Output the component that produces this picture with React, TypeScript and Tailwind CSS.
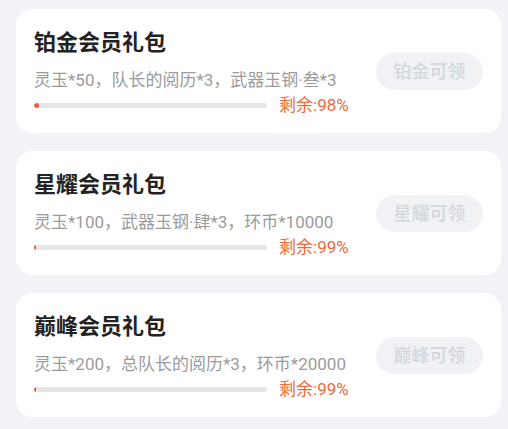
const packs = [
  { name: "铂金会员礼包", desc: "灵玉*50，队长的阅历*3，武器玉钢·叁*3", left: 98, btn: "铂金可领" },
  { name: "星耀会员礼包", desc: "灵玉*100，武器玉钢·肆*3，环币*10000", left: 99, btn: "星耀可领" },
  { name: "巅峰会员礼包", desc: "灵玉*200，总队长的阅历*3，环币*20000", left: 99, btn: "巅峰可领" },
];

export default function App() {
  return (
    <div
      className="min-h-[429px] w-[508px] bg-[#f2f3f7] px-4 pt-[9px] flex flex-col gap-[18px]"
      style={{ fontFamily: 'Roboto, "Noto Sans CJK SC", sans-serif' }}
    >
      {packs.map((p) => (
        <div
          key={p.name}
          className="w-[485px] rounded-[16px] bg-white pl-[18px] pr-[18px] flex items-center justify-between"
        >
          <div className="pt-[19px] pb-[17px] flex flex-col">
            <div className="text-[22px] leading-[30px] font-bold text-[#222]">{p.name}</div>
            <div className="mt-[11px] text-[17px] leading-[22px] text-[#9b9b9b]">{p.desc}</div>
            <div className="mt-[3px] flex items-center gap-3 h-[22px]">
              <div className="w-[233px] h-[5px] rounded-full bg-[#e6e6e6] overflow-hidden">
                <div
                  className="h-full rounded-full bg-[#e8603a]"
                  style={{ width: `${Math.max(100 - p.left, 1) * 2.4}px` }}
                />
              </div>
              <span className="text-[17px] leading-[22px] text-[#ec6a3d]">剩余:{p.left}%</span>
            </div>
          </div>
          <div className="w-[107px] h-[37px] rounded-full bg-[#f0f2f5] flex items-center justify-center text-[18px] font-medium text-[#d3d7dc]">
            {p.btn}
          </div>
        </div>
      ))}
    </div>
  );
}
